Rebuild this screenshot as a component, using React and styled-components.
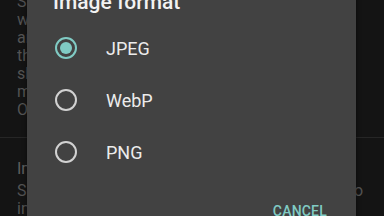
import React, { useState } from "react";
import styled, { createGlobalStyle } from "styled-components";

const Global = createGlobalStyle`
  html, body { margin: 0; padding: 0; background: #141414; }
  body { width: 384px; height: 216px; overflow: hidden; font-family: Roboto, "Noto Sans", sans-serif; }
  #root { position: relative; width: 384px; height: 216px; overflow: hidden; }
`;

const Screen = styled.div`
  position: relative;
  width: 384px;
  height: 216px;
  overflow: hidden;
  background: #141414;
`;

const SettingsList = styled.div`
  display: flex;
  flex-direction: column;
  margin-top: -7px;
`;

const SettingItem = styled.div`
  display: flex;
  flex-direction: column;
  padding: ${(p) => p.$pad || "0 16px 0 17px"};
`;

const ItemTitle = styled.div`
  font-size: 16px;
  line-height: 18px;
  color: #5e5e5e;
  margin-bottom: 4px;
`;

const Summary = styled.div`
  font-size: 16px;
  line-height: 18px;
  color: #535353;
  white-space: nowrap;
  overflow: hidden;
`;

const Divider = styled.div`
  height: 1px;
  background: #262626;
  margin: ${(p) => p.$margin || "0"};
`;

const Dialog = styled.div`
  position: absolute;
  left: 27px;
  top: -12px;
  width: 329px;
  background: #424242;
  box-shadow: 0 0 4px rgba(0, 0, 0, 0.6);
  display: flex;
  flex-direction: column;
`;

const DialogTitle = styled.div`
  font-size: 21px;
  font-weight: 500;
  line-height: 28px;
  color: #f2f2f2;
  padding: 0 26px;
  margin-bottom: 6px;
`;

const OptionList = styled.div`
  display: flex;
  flex-direction: column;
`;

const Option = styled.label`
  display: flex;
  align-items: center;
  height: 52px;
  padding-left: 28px;
  gap: 29px;
  cursor: pointer;
`;

const Radio = styled.span`
  box-sizing: border-box;
  width: 22px;
  height: 22px;
  border-radius: 50%;
  border: 2px solid ${(p) => (p.$checked ? "#80cbc4" : "#d2d2d2")};
  display: flex;
  align-items: center;
  justify-content: center;
  flex: none;
  &::after {
    content: "";
    width: 12px;
    height: 12px;
    border-radius: 50%;
    background: #80cbc4;
    display: ${(p) => (p.$checked ? "block" : "none")};
  }
`;

const OptionLabel = styled.span`
  font-size: 18px;
  color: #ececec;
  line-height: 20px;
  padding-top: 2px;
`;

const Actions = styled.div`
  display: flex;
  justify-content: flex-end;
  padding: 25px 29px 8px 0;
`;

const TextButton = styled.button`
  background: none;
  border: none;
  padding: 0;
  font-family: inherit;
  font-size: 14px;
  font-weight: 500;
  line-height: 16px;
  color: #80cbc4;
  letter-spacing: 0.2px;
`;

const formats = ["JPEG", "WebP", "PNG"];

const item1Lines = [
  "Saves the screenshot in full quality",
  "when you press the capture button",
  "and copies it to the clipboard so",
  "that it can be pasted anywhere and",
  "shared with other apps. The",
  "media folder keeps every capture.",
  "Only the visible page is captured.",
];

const item2Lines = [
  "Set the compression level used for the images to",
  "increase quality or reduce the file size.",
];

export default function App() {
  const [selected, setSelected] = useState("JPEG");
  return (
    <>
      <Global />
      <Screen>
        <SettingsList>
          <SettingItem $pad="0 30px 0 17px">
            {item1Lines.map((l) => (
              <Summary key={l}>{l}</Summary>
            ))}
          </SettingItem>
          <Divider $margin="18px 0 0 0" />
          <SettingItem $pad="22px 16px 0 17px">
            <ItemTitle>Image quality</ItemTitle>
            {item2Lines.map((l) => (
              <Summary key={l}>{l}</Summary>
            ))}
          </SettingItem>
        </SettingsList>

        <Dialog>
          <DialogTitle>Image format</DialogTitle>
          <OptionList>
            {formats.map((f) => (
              <Option key={f} onClick={() => setSelected(f)}>
                <Radio $checked={selected === f} />
                <OptionLabel>{f}</OptionLabel>
              </Option>
            ))}
          </OptionList>
          <Actions>
            <TextButton>CANCEL</TextButton>
          </Actions>
        </Dialog>
      </Screen>
    </>
  );
}
